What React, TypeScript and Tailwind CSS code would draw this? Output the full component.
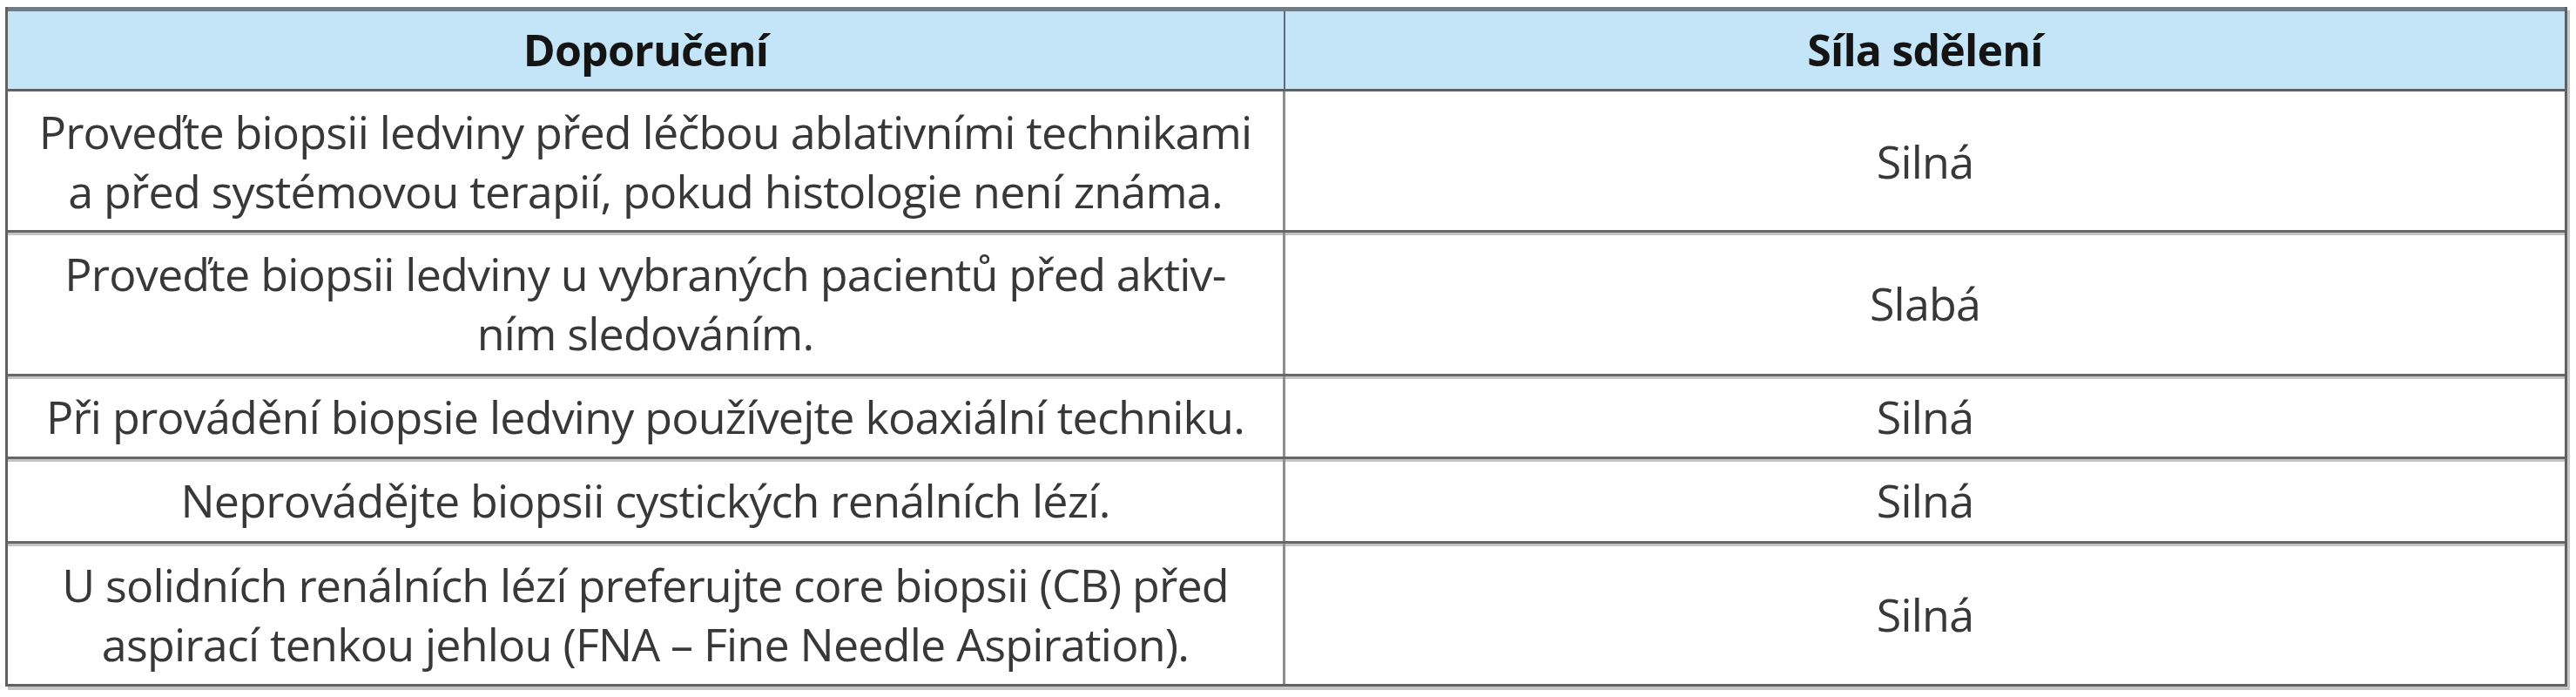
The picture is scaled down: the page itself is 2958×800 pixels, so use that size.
const rows: { text: string[]; strength: string; h: string }[] = [
  {
    text: [
      'Proveďte biopsii ledviny před léčbou ablativními technikami',
      'a před systémovou terapií, pokud histologie není známa.',
    ],
    strength: 'Silná',
    h: 'h-[162px]',
  },
  {
    text: ['Proveďte biopsii ledviny u vybraných pacientů před aktiv-', 'ním sledováním.'],
    strength: 'Slabá',
    h: 'h-[165px]',
  },
  {
    text: ['Při provádění biopsie ledviny používejte koaxiální techniku.'],
    strength: 'Silná',
    h: 'h-[95px]',
  },
  {
    text: ['Neprovádějte biopsii cystických renálních lézí.'],
    strength: 'Silná',
    h: 'h-[97px]',
  },
  {
    text: [
      'U solidních renálních lézí preferujte core biopsii (CB) před',
      'aspirací tenkou jehlou (FNA – Fine Needle Aspiration).',
    ],
    strength: 'Silná',
    h: 'h-[161px]',
  },
];

export default function App() {
  return (
    <div className="min-h-[800px] w-[2958px] bg-white pt-[8px] pl-[6px] font-['Open_Sans',sans-serif]">
      <div className="w-[2942px] border-x-[3px] border-b-[3px] border-[#616161] shadow-[3px_4px_0_#c6c6c6]">
        {/* header */}
        <div className="grid h-[97px] grid-cols-[1467px_1fr] border-t-[5px] border-b-[3px] border-t-[#6f7c86] border-b-[#5d6266] bg-[#c3e5f7] text-[50px] font-bold tracking-[-0.8px] text-[#141414]">
          <div className="flex items-center justify-center border-r-[2px] border-[#5f6b73]">Doporučení</div>
          <div className="flex items-center justify-center">Síla sdělení</div>
        </div>

        {rows.map((r, i) => (
          <div
            key={i}
            className={`grid grid-cols-[1467px_1fr] ${r.h} ${
              i < rows.length - 1 ? 'border-b-[3px] border-[#676767]' : ''
            } ${i > 0 ? 'shadow-[inset_0_3px_0_#c4c4c4]' : ''} text-[52px] leading-[68px] tracking-[-0.8px] text-[#383838]`}
          >
            <div className="flex flex-col items-center justify-center border-r-[3px] border-[#8e8e8e] text-center">
              {r.text.map((t) => (
                <span key={t} className="whitespace-nowrap">
                  {t}
                </span>
              ))}
            </div>
            <div className="flex items-center justify-center">{r.strength}</div>
          </div>
        ))}
      </div>
    </div>
  );
}
